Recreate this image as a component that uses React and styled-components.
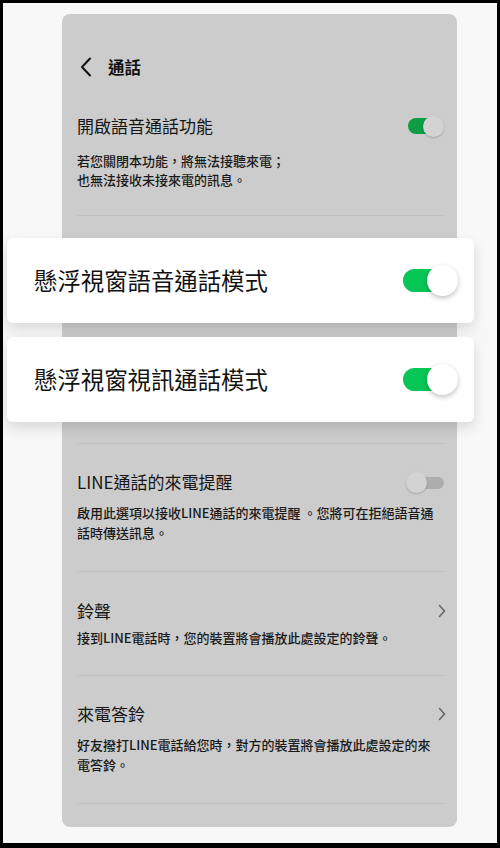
import React from "react";
import styled, { createGlobalStyle } from "styled-components";

const Global = createGlobalStyle`
  html, body { margin: 0; padding: 0; }
  body { font-family: "Noto Sans CJK TC", "Noto Sans", sans-serif; }
  * { box-sizing: border-box; }
`;

const Frame = styled.div`
  width: 500px;
  height: 848px;
  border: 3px solid #000;
  border-bottom-width: 5px;
  background: #f8f8f8;
  padding: 11px 0 0 59px;
  overflow: hidden;
`;

const Panel = styled.div`
  width: 395px;
  background: #cccccc;
  border-radius: 8px;
  padding: 28px 13px 23px 15px;
  display: flex;
  flex-direction: column;
`;

const Header = styled.div`
  height: 50px;
  display: flex;
  align-items: center;
  gap: 16px;
  padding-left: 3px;
`;

const HeaderTitle = styled.div`
  font-size: 16.5px;
  font-weight: 700;
  color: #111;
  line-height: 1;
`;

const Section = styled.div`
  padding: ${(p) => p.$pt}px 0 ${(p) => p.$pb}px;
  border-bottom: 1px solid rgba(0, 0, 0, 0.05);
`;

const Row = styled.div`
  display: flex;
  align-items: center;
  justify-content: space-between;
  height: 24px;
`;

const Title = styled.div`
  font-size: 17px;
  line-height: 24px;
  color: #161616;
`;

const Desc = styled.div`
  margin-top: ${(p) => p.$gap}px;
  font-size: 13px;
  font-weight: 500;
  line-height: ${(p) => p.$lh}px;
  color: #1a1a1a;
  white-space: nowrap;
`;

const Divider = styled.div`
  margin-top: ${(p) => p.$mt}px;
  height: 1px;
  background: rgba(0, 0, 0, 0.05);
`;

const Card = styled.div`
  margin: ${(p) => p.$mt}px -30px 0 -70px;
  height: 85px;
  background: #fff;
  border-radius: 6px;
  box-shadow: 0 6px 14px rgba(0, 0, 0, 0.13);
  display: flex;
  align-items: center;
  justify-content: space-between;
  padding: 0 16px 0 27px;
`;

const CardTitle = styled.div`
  font-size: 23.4px;
  color: #111;
  line-height: 1;
`;

/* big bright toggle on cards */
const BigSwitch = styled.div`
  position: relative;
  width: 55px;
  height: 31px;
`;
const BigTrack = styled.div`
  position: absolute;
  left: 0;
  top: 4px;
  width: 42px;
  height: 23px;
  border-radius: 12px;
  background: #06c755;
`;
const BigKnob = styled.div`
  position: absolute;
  left: 24px;
  top: 0;
  width: 31px;
  height: 31px;
  border-radius: 50%;
  background: #fff;
  box-shadow: 0 2px 5px rgba(0, 0, 0, 0.25);
`;

/* small dimmed toggle in panel */
const SmallSwitch = styled.div`
  position: relative;
  width: 36px;
  height: 21px;
`;
const SmallTrack = styled.div`
  position: absolute;
  top: ${(p) => (p.$on ? 2.5 : 5)}px;
  ${(p) => (p.$on ? "left: 0;" : "right: 0;")}
  width: ${(p) => (p.$on ? 32 : 30)}px;
  height: ${(p) => (p.$on ? 16 : 12)}px;
  border-radius: 8px;
  background: ${(p) => (p.$on ? "#109c45" : "#adadad")};
`;
const SmallKnob = styled.div`
  position: absolute;
  top: 0;
  ${(p) => (p.$on ? "right: 0;" : "left: -2px;")}
  width: 21px;
  height: 21px;
  border-radius: 50%;
  background: #d3d3d3;
  box-shadow: 0 1px 2px rgba(0, 0, 0, 0.2);
`;

const BackIcon = () => (
  <svg width="12" height="20" viewBox="0 0 12 20">
    <path d="M10 1.5 L2 10 L10 18.5" fill="none" stroke="#111" strokeWidth="2" strokeLinecap="round" strokeLinejoin="round" />
  </svg>
);

const ChevronRight = () => (
  <svg width="8" height="14" viewBox="0 0 8 14" style={{ marginRight: -2 }}>
    <path d="M1.5 1.5 L6.5 7 L1.5 12.5" fill="none" stroke="#666" strokeWidth="1.6" strokeLinecap="round" strokeLinejoin="round" />
  </svg>
);

const Toggle = ({ on }) => (
  <SmallSwitch>
    <SmallTrack $on={on} />
    <SmallKnob $on={on} />
  </SmallSwitch>
);

const BigToggle = () => (
  <BigSwitch>
    <BigTrack />
    <BigKnob />
  </BigSwitch>
);

export default function App() {
  return (
    <>
      <Global />
      <Frame>
        <Panel>
          <Header>
            <BackIcon />
            <HeaderTitle>通話</HeaderTitle>
          </Header>

          <Section $pt={22} $pb={26}>
            <Row>
              <Title>開啟語音通話功能</Title>
              <Toggle on />
            </Row>
            <Desc $gap={13} $lh={19}>
              若您關閉本功能，將無法接聽來電；
              <br />
              也無法接收未接來電的訊息。
            </Desc>
          </Section>

          <Card $mt={22}>
            <CardTitle>懸浮視窗語音通話模式</CardTitle>
            <BigToggle />
          </Card>
          <Card $mt={14}>
            <CardTitle>懸浮視窗視訊通話模式</CardTitle>
            <BigToggle />
          </Card>

          <Divider $mt={21} />

          <Section $pt={26} $pb={28}>
            <Row>
              <Title>LINE通話的來電提醒</Title>
              <Toggle on={false} />
            </Row>
            <Desc $gap={9} $lh={20}>
              啟用此選項以接收LINE通話的來電提醒 。您將可在拒絕語音通
              <br />
              話時傳送訊息。
            </Desc>
          </Section>

          <Section $pt={27} $pb={27}>
            <Row>
              <Title>鈴聲</Title>
              <ChevronRight />
            </Row>
            <Desc $gap={5} $lh={20}>
              接到LINE電話時，您的裝置將會播放此處設定的鈴聲。
            </Desc>
          </Section>

          <Section $pt={26} $pb={28}>
            <Row>
              <Title>來電答鈴</Title>
              <ChevronRight />
            </Row>
            <Desc $gap={9} $lh={20}>
              好友撥打LINE電話給您時，對方的裝置將會播放此處設定的來
              <br />
              電答鈴。
            </Desc>
          </Section>
        </Panel>
      </Frame>
    </>
  );
}
